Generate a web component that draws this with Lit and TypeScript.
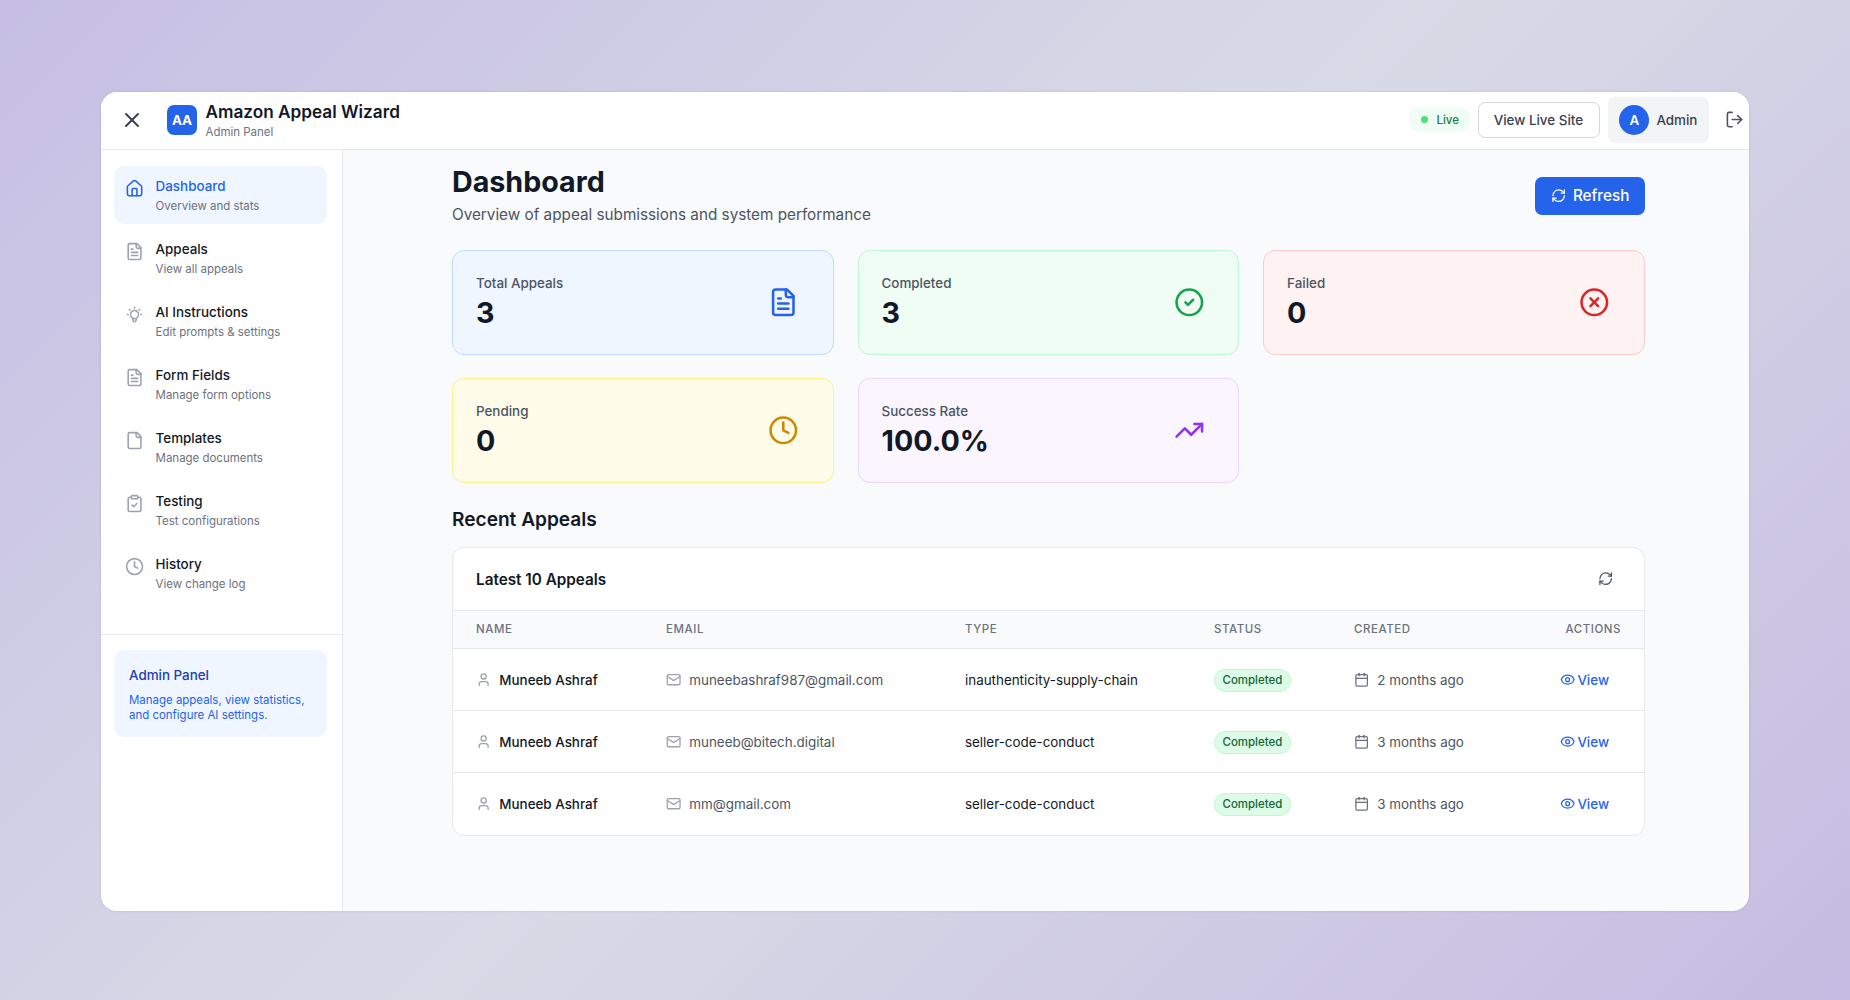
import { LitElement, html, css, svg } from "lit";
import { customElement } from "lit/decorators.js";

const P: Record<string, any> = {
  house: svg`<path d="M15 21v-8a1 1 0 0 0-1-1h-4a1 1 0 0 0-1 1v8"/><path d="M3 10a2 2 0 0 1 .709-1.528l7-5.999a2 2 0 0 1 2.582 0l7 5.999A2 2 0 0 1 21 10v9a2 2 0 0 1-2 2H5a2 2 0 0 1-2-2z"/>`,
  fileText: svg`<path d="M15 2H6a2 2 0 0 0-2 2v16a2 2 0 0 0 2 2h12a2 2 0 0 0 2-2V7Z"/><path d="M14 2v4a2 2 0 0 0 2 2h4"/><path d="M10 9H8"/><path d="M16 13H8"/><path d="M16 17H8"/>`,
  file: svg`<path d="M15 2H6a2 2 0 0 0-2 2v16a2 2 0 0 0 2 2h12a2 2 0 0 0 2-2V7Z"/><path d="M14 2v4a2 2 0 0 0 2 2h4"/>`,
  bulb: svg`<path d="M9.663 17h4.673M12 3v1m6.364 1.636l-.707.707M21 12h-1M4 12H3m3.343-5.657l-.707-.707m2.828 9.9a5 5 0 117.072 0l-.548.547A3.374 3.374 0 0014 18.469V19a2 2 0 11-4 0v-.531c0-.895-.356-1.754-.988-2.386l-.548-.547z"/>`,
  clip: svg`<rect width="8" height="4" x="8" y="2" rx="1" ry="1"/><path d="M16 4h2a2 2 0 0 1 2 2v14a2 2 0 0 1-2 2H6a2 2 0 0 1-2-2V6a2 2 0 0 1 2-2h2"/><path d="m9 14 2 2 4-4"/>`,
  clock: svg`<circle cx="12" cy="12" r="10"/><polyline points="12 6 12 12 16 14"/>`,
  check: svg`<circle cx="12" cy="12" r="10"/><path d="m9 12 2 2 4-4"/>`,
  xc: svg`<circle cx="12" cy="12" r="10"/><path d="m15 9-6 6"/><path d="m9 9 6 6"/>`,
  trend: svg`<polyline points="22 7 13.5 15.5 8.5 10.5 2 17"/><polyline points="16 7 22 7 22 13"/>`,
  refresh: svg`<path d="M3 12a9 9 0 0 1 9-9 9.75 9.75 0 0 1 6.74 2.74L21 8"/><path d="M21 3v5h-5"/><path d="M21 12a9 9 0 0 1-9 9 9.75 9.75 0 0 1-6.74-2.74L3 16"/><path d="M8 16H3v5"/>`,
  logout: svg`<path d="M9 21H5a2 2 0 0 1-2-2V5a2 2 0 0 1 2-2h4"/><polyline points="16 17 21 12 16 7"/><line x1="21" y1="12" x2="9" y2="12"/>`,
  user: svg`<path d="M19 21v-2a4 4 0 0 0-4-4H9a4 4 0 0 0-4 4v2"/><circle cx="12" cy="7" r="4"/>`,
  mail: svg`<rect width="20" height="16" x="2" y="4" rx="2"/><path d="m22 7-8.97 5.7a1.94 1.94 0 0 1-2.06 0L2 7"/>`,
  cal: svg`<path d="M8 2v4"/><path d="M16 2v4"/><rect width="18" height="18" x="3" y="4" rx="2"/><path d="M3 10h18"/>`,
  eye: svg`<path d="M2.062 12.348a1 1 0 0 1 0-.696 10.75 10.75 0 0 1 19.876 0 1 1 0 0 1 0 .696 10.75 10.75 0 0 1-19.876 0"/><circle cx="12" cy="12" r="3"/>`,
  x: svg`<path d="M18 6 6 18"/><path d="m6 6 12 12"/>`,
};

const icon = (name: string, cls: string) =>
  html`<svg class="ic ${cls}" viewBox="0 0 24 24" fill="none" stroke="currentColor" stroke-width="2" stroke-linecap="round" stroke-linejoin="round">${P[name]}</svg>`;

const NAV = [
  ["house", "Dashboard", "Overview and stats", true],
  ["fileText", "Appeals", "View all appeals", false],
  ["bulb", "AI Instructions", "Edit prompts & settings", false],
  ["fileText", "Form Fields", "Manage form options", false],
  ["file", "Templates", "Manage documents", false],
  ["clip", "Testing", "Test configurations", false],
  ["clock", "History", "View change log", false],
] as const;

const STATS = [
  ["blue", "Total Appeals", "3", "fileText"],
  ["green", "Completed", "3", "check"],
  ["red", "Failed", "0", "xc"],
  ["yellow", "Pending", "0", "clock"],
  ["purple", "Success Rate", "100.0%", "trend"],
];

const ROWS = [
  ["muneebashraf987@gmail.com", "inauthenticity-supply-chain", "2 months ago"],
  ["muneeb@bitech.digital", "seller-code-conduct", "3 months ago"],
  ["mm@gmail.com", "seller-code-conduct", "3 months ago"],
];

@customElement("app-root")
export class AppRoot extends LitElement {
  static styles = css`
    :host {
      display: block;
      height: 1000px;
      box-sizing: border-box;
      padding-top: 92px;
      font-family: Inter, "Liberation Sans", sans-serif;
      color: #111827;
      background: linear-gradient(135deg, #c6bee4 0%, #d8dbe6 50%, #c6bbe2 100%);
      overflow: hidden;
    }
    * { box-sizing: border-box; }
    .ic { display: block; flex: none; }
    .window {
      width: 1648px;
      height: 819px;
      margin: 0 auto;
      background: #f9fafb;
      border-radius: 16px;
      box-shadow: 0 0 2px rgba(80, 70, 120, 0.25);
      overflow: hidden;
      display: flex;
      flex-direction: column;
    }
    header {
      height: 58px;
      flex: none;
      background: #fff;
      border-bottom: 1px solid #e5e7eb;
      display: flex;
      align-items: center;
      padding: 0 5px 2px 19px;
    }
    .close { width: 24px; height: 24px; color: #374151; }
    .logo {
      width: 30px; height: 30px; margin-left: 23px;
      border-radius: 7px; background: #2563eb; color: #fff;
      font-size: 13.4px; font-weight: 700;
      display: flex; align-items: center; justify-content: center;
    }
    .brand { margin-left: 8.5px; }
    .brand b { display: block; font-size: 17.2px; font-weight: 600; line-height: 24px; color: #111827; }
    .brand span { display: block; font-size: 11.46px; line-height: 16px; color: #6b7280; }
    .right { margin-left: auto; display: flex; align-items: center; }
    .live {
      width: 61px; height: 23px; border-radius: 8px; background: #f0fdf4; color: #15803d;
      font-size: 11.46px; font-weight: 500;
      display: flex; align-items: center; padding-left: 12px; gap: 8px;
    }
    .live i { width: 7px; height: 7px; border-radius: 50%; background: #4ade80; }
    .site {
      margin-left: 8px; width: 122px; height: 36px; border: 1px solid #d1d5db; border-radius: 7px;
      background: #fff; color: #374151; font-size: 13.4px; font-weight: 500; padding-right: 2px;
      display: flex; align-items: center; justify-content: center;
    }
    .chip {
      margin-left: 8px; width: 101px; height: 46px; border-radius: 7px; background: #f3f4f6;
      display: flex; align-items: center; padding-left: 11px; gap: 7px;
      font-size: 13.4px; font-weight: 500; color: #374151;
    }
    .avatar {
      width: 30px; height: 30px; border-radius: 50%; background: #2563eb; color: #fff;
      font-size: 13.4px; font-weight: 600;
      display: flex; align-items: center; justify-content: center;
    }
    .logout { width: 19.1px; height: 19.1px; margin-left: 15.5px; color: #4b5563; }

    .body { flex: 1; display: flex; min-height: 0; }
    aside {
      width: 242px; flex: none; background: #fff; border-right: 1px solid #e5e7eb;
      display: flex; flex-direction: column;
    }
    nav {
      height: 485px; padding: 16px 15px 0 13px; display: flex; flex-direction: column; gap: 5px;
      border-bottom: 1px solid #e5e7eb;
    }
    .item {
      height: 58px; border-radius: 10px; padding: 10px 11px 0; display: flex; gap: 11.5px; color: #111827;
    }
    .item .ic { width: 19.1px; height: 19.1px; margin-top: 3px; color: #9ca3af; }
    .item b { display: block; font-size: 13.4px; font-weight: 500; line-height: 20px; }
    .item span { display: block; font-size: 11.46px; line-height: 16px; margin-top: 1.5px; color: #6b7280; }
    .item.on { background: #eff6ff; }
    .item.on b { color: #2563eb; }
    .item.on .ic { color: #2563eb; }
    .panel {
      margin: 15px 15px 0 13px; height: 87px; border-radius: 10px; background: #eff6ff; padding: 15px;
    }
    .panel b { display: block; font-size: 13.4px; font-weight: 500; line-height: 20px; color: #1e40af; }
    .panel p { margin: 7.5px 0 0; font-size: 11.46px; line-height: 15px; color: #2563eb; }

    main { flex: 1; min-width: 0; padding: 14px 104px 0 109px; }
    .top { display: flex; justify-content: space-between; align-items: center; margin-bottom: 23px; }
    h1 { margin: 0; font-size: 28.65px; line-height: 36px; font-weight: 700; color: #111827; }
    .top p { margin: 3px 0 0; font-size: 15.28px; line-height: 24px; color: #4b5563; }
    .refresh {
      width: 110px; height: 38px; border-radius: 7px; background: #2563eb; color: #fff;
      font-size: 15.28px; font-weight: 500;
      display: flex; align-items: center; justify-content: center; gap: 7px;
    }
    .refresh .ic { width: 15.3px; height: 15.3px; }
    .grid { display: grid; grid-template-columns: repeat(3, 1fr); gap: 23px 23.6px; }
    .stat {
      height: 105px; border: 1px solid; border-radius: 12px; padding: 0 34px 1px 23px;
      display: flex; align-items: center; justify-content: space-between;
    }
    .stat span { display: block; font-size: 13.4px; font-weight: 500; line-height: 19px; color: #4b5563; }
    .stat strong { display: block; font-size: 28.65px; font-weight: 700; line-height: 34px; margin-top: 3px; color: #111827; }
    .stat .ic { width: 30.6px; height: 30.6px; }
    .blue { background: #eff6ff; border-color: #bfdbfe; }
    .blue .ic { color: #2563eb; }
    .green { background: #f0fdf4; border-color: #bbf7d0; }
    .green .ic { color: #16a34a; }
    .red { background: #fef2f2; border-color: #fecaca; }
    .red .ic { color: #dc2626; }
    .yellow { background: #fefce8; border-color: #fef08a; }
    .yellow .ic { color: #ca8a04; }
    .purple { background: #faf5ff; border-color: #e9d5ff; }
    .purple .ic { color: #9333ea; }
    h2 { margin: 22px 0 14px; font-size: 19.1px; line-height: 28px; font-weight: 600; color: #111827; }
    .card { background: #fff; border: 1px solid #e5e7eb; border-radius: 12px; overflow: hidden; }
    .cardhead {
      height: 62px; display: flex; align-items: center; justify-content: space-between;
      padding: 0 31px 0 23px;
    }
    .cardhead b { font-size: 15.28px; font-weight: 600; color: #111827; }
    .cardhead .ic { width: 15.3px; height: 15.3px; color: #4b5563; }
    table { width: 100%; border-collapse: collapse; table-layout: fixed; }
    col.c1 { width: 190px; }
    col.c2 { width: 299px; }
    col.c3 { width: 249px; }
    col.c4 { width: 140px; }
    col.c5 { width: 199px; }
    th {
      height: 38px; padding: 0 0 2px 23px; text-align: left; font-size: 11.46px; font-weight: 500;
      letter-spacing: 0.57px; text-transform: uppercase; color: #6b7280; background: #f9fafb;
      border-top: 1px solid #e5e7eb; border-bottom: 1px solid #e5e7eb;
    }
    th.end { text-align: right; padding: 0 23px 2px 0; }
    td { height: 62px; padding: 0 0 0 23px; font-size: 13.4px; border-top: 1px solid #e5e7eb; }
    td.shift { padding-top: 1px; }
    tr:first-child td { border-top: 0; }
    .cell { display: flex; align-items: center; gap: 8px; color: #4b5563; white-space: nowrap; }
    .cell .ic { width: 15.3px; height: 15.3px; color: #9ca3af; }
    .name { font-weight: 500; color: #111827; }
    .type { color: #111827; }
    .badge {
      display: inline-flex; align-items: center; height: 23px; padding: 0 7.5px; border-radius: 12px;
      background: #dcfce7; border: 1px solid #bbf7d0; color: #166534; font-size: 11.46px; font-weight: 500;
    }
    .when .ic { color: #6b7280; }
    .view { justify-content: flex-end; gap: 2.5px; padding-right: 35px; color: #2563eb; font-weight: 500; }
    .view .ic { color: #2563eb; }
  `;

  render() {
    return html`
      <div class="window">
        <header>
          ${icon("x", "close")}
          <div class="logo">AA</div>
          <div class="brand"><b>Amazon Appeal Wizard</b><span>Admin Panel</span></div>
          <div class="right">
            <div class="live"><i></i>Live</div>
            <div class="site">View Live Site</div>
            <div class="chip"><div class="avatar">A</div>Admin</div>
            ${icon("logout", "logout")}
          </div>
        </header>
        <div class="body">
          <aside>
            <nav>
              ${NAV.map(
                ([ic, label, sub, on]) => html`
                  <div class="item ${on ? "on" : ""}">
                    ${icon(ic, "")}
                    <div><b>${label}</b><span>${sub}</span></div>
                  </div>
                `
              )}
            </nav>
            <div class="panel">
              <b>Admin Panel</b>
              <p>Manage appeals, view statistics,<br />and configure AI settings.</p>
            </div>
          </aside>
          <main>
            <div class="top">
              <div>
                <h1>Dashboard</h1>
                <p>Overview of appeal submissions and system performance</p>
              </div>
              <div class="refresh">${icon("refresh", "")}Refresh</div>
            </div>
            <div class="grid">
              ${STATS.map(
                ([c, l, v, ic]) => html`
                  <div class="stat ${c}">
                    <div><span>${l}</span><strong>${v}</strong></div>
                    ${icon(ic, "")}
                  </div>
                `
              )}
            </div>
            <h2>Recent Appeals</h2>
            <div class="card">
              <div class="cardhead"><b>Latest 10 Appeals</b>${icon("refresh", "")}</div>
              <table>
                <colgroup>
                  <col class="c1" /><col class="c2" /><col class="c3" /><col class="c4" /><col class="c5" /><col />
                </colgroup>
                <thead>
                  <tr>
                    <th>Name</th><th>Email</th><th>Type</th><th>Status</th><th>Created</th><th class="end">Actions</th>
                  </tr>
                </thead>
                <tbody>
                  ${ROWS.map(
                    ([mail, type, when]) => html`
                      <tr>
                        <td><div class="cell">${icon("user", "")}<span class="name">Muneeb Ashraf</span></div></td>
                        <td><div class="cell">${icon("mail", "")}<span>${mail}</span></div></td>
                        <td class="type shift">${type}</td>
                        <td class="shift"><span class="badge">Completed</span></td>
                        <td><div class="cell when">${icon("cal", "")}<span>${when}</span></div></td>
                        <td><div class="cell view">${icon("eye", "")}<span>View</span></div></td>
                      </tr>
                    `
                  )}
                </tbody>
              </table>
            </div>
          </main>
        </div>
      </div>
    `;
  }
}
